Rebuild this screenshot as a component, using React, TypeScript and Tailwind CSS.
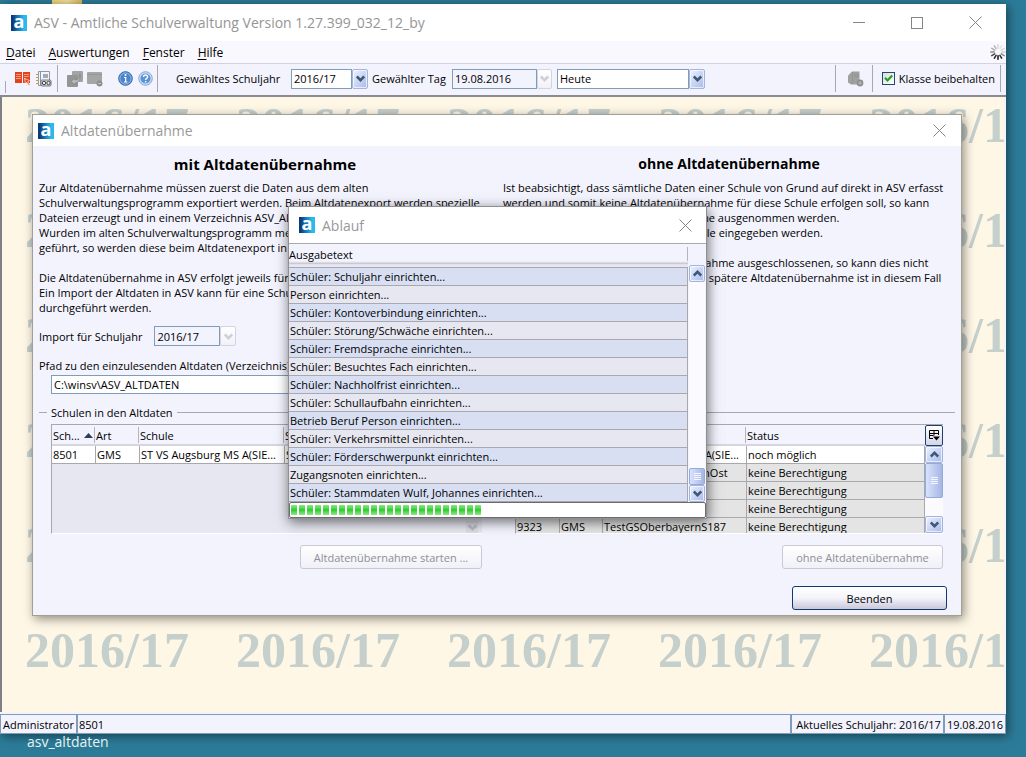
import React from "react";

function Logo() {
  return (
    <span
      aria-hidden="true"
      className="flex h-4 w-4 shrink-0 items-center justify-center bg-linear-to-r from-[#0f3a78] from-10% via-[#1787c4] via-50% to-[#2ab9ee] to-80% pb-1 text-[18px] leading-none font-bold text-white"
    >
      a
    </span>
  );
}

function CloseIcon() {
  return (
    <svg width="13" height="13" viewBox="0 0 13 13" fill="none" stroke="#858585" strokeWidth="1">
      <path d="M.5.5l12 12M12.5.5l-12 12" />
    </svg>
  );
}

function Chevron({ up = false, color = "#3f5878" }: { up?: boolean; color?: string }) {
  return (
    <svg width="9" height="7" viewBox="0 0 9 7" fill="none" stroke={color} strokeWidth="2.6">
      <path d={up ? "M.8 5.6l3.7-3.7 3.7 3.7" : "M.8 1.4l3.7 3.7 3.7-3.7"} />
    </svg>
  );
}

const arrowBox =
  "flex items-center justify-center rounded-[2px] border border-[#a3b5de] bg-linear-to-br from-[#eef2fe] to-[#a9baea] shadow-[inset_0_0_0_1px_#ffffffaa]";
const arrowBoxOff =
  "flex items-center justify-center rounded-[2px] border border-[#d3d4de] bg-linear-to-b from-white to-[#f1f1f8]";

function Combo({
  label,
  value,
  width,
  disabled = false,
}: {
  label: string;
  value: string;
  width: string;
  disabled?: boolean;
}) {
  return (
    <span className={`relative flex h-5 ${width}`}>
      <select
        aria-label={label}
        disabled={disabled}
        className={`mr-4 w-full appearance-none border border-[#7f9db9] pl-[2px] text-black opacity-100 ${
          disabled ? "bg-[#f3f3fe]" : "bg-white"
        }`}
      >
        <option>{value}</option>
      </select>
      <span
        className={`pointer-events-none absolute inset-y-0 right-0 w-4 ${
          disabled ? arrowBoxOff : arrowBox + " border-[#7f9db9]"
        }`}
      >
        <Chevron color={disabled ? "#cfcfd8" : "#3f5878"} />
      </span>
    </span>
  );
}

function Separator() {
  return <span className="h-[27px] w-px shrink-0 bg-[#a9a9ad]" />;
}

function ToolButton({ label, children }: { label: string; children: React.ReactNode }) {
  return (
    <button aria-label={label} className="flex h-4 w-4 shrink-0 items-center justify-center">
      {children}
    </button>
  );
}

function BookIcon() {
  return (
    <svg width="16" height="16" viewBox="0 0 16 16">
      <path d="M0 1h7v11H0zM8 1h7v11H8z" fill="#e2431c" />
      <path d="M1 3.500h5M1 5.500h5M1 7.500h5M9 3.500h5M9 5.500h5M9 7.500h2" stroke="#f59a80" />
      <path d="M9.500 7.500l5 2-1.700 1 2.200 3.500-1 .7-2.300-3.500-1.200 1.300z" fill="#e2431c" stroke="#fff" strokeWidth=".6" />
    </svg>
  );
}

function NotebookIcon() {
  return (
    <svg width="16" height="16" viewBox="0 0 16 16">
      <path d="M2.500.5h11v14h-11z" fill="#f4f5f7" stroke="#8d97a5" />
      <path d="M4.500 1v13" stroke="#6f9ad0" />
      <path d="M0 3.500h3M0 6.500h3M0 9.500h3M0 12.500h3" stroke="#c79a4a" />
      <path d="M7 3h5v4H7z" fill="#a4a9b0" />
      <rect x="5" y="9" width="10" height="6" rx="1" fill="#d9dadd" stroke="#77797e" />
      <circle cx="8" cy="12" r="1.700" fill="#eee" stroke="#444" />
      <circle cx="12.500" cy="12" r="1.700" fill="#eee" stroke="#444" />
    </svg>
  );
}

function SwapIcon() {
  return (
    <svg width="16" height="16" viewBox="0 0 16 16">
      <rect x="5" y="0" width="11" height="11" rx="1" fill="#a3a3a3" />
      <rect x="0" y="4" width="11" height="12" rx="1" fill="#959595" />
      <path d="M13 3c0 4-2 6-5 6V7l-4 3.500L8 14v-2c3 0 6-3 5-9z" fill="#b9b9b9" stroke="#838383" strokeWidth=".7" />
    </svg>
  );
}

function WindowIcon() {
  return (
    <svg width="16" height="16" viewBox="0 0 16 16">
      <rect x="0" y="1" width="15" height="12" rx="1" fill="#a5a5a5" />
      <path d="M0 3.500h15" stroke="#979797" />
      <circle cx="12.500" cy="12.500" r="3" fill="#8f8f8f" />
      <path d="M11 12.500h3" stroke="#c4c4c4" />
    </svg>
  );
}

function InfoIcon() {
  return (
    <svg width="15" height="15" viewBox="0 0 15 15">
      <circle cx="7.500" cy="7.500" r="6.800" fill="#4a86c9" stroke="#2f64a8" />
      <circle cx="7.500" cy="7.500" r="5.600" fill="none" stroke="#a9ccf0" strokeWidth=".8" />
      <path d="M6 6.500h1.700v4.300M6 11h3.400" stroke="#fff" strokeWidth="1.200" fill="none" />
      <circle cx="7.500" cy="4" r="1" fill="#fff" />
    </svg>
  );
}

function HelpIcon() {
  return (
    <svg width="15" height="15" viewBox="0 0 15 15">
      <circle cx="7.500" cy="7.500" r="6.800" fill="#c8dcf4" stroke="#86a8d4" />
      <circle cx="7.500" cy="7.500" r="5" fill="#5c93d2" />
      <path d="M5.600 6c0-2.600 4-2.600 4 0 0 1.500-2 1.300-2 3M7.600 10v1.500" stroke="#fff" strokeWidth="1.400" fill="none" />
    </svg>
  );
}

function DatabaseIcon() {
  return (
    <svg width="16" height="16" viewBox="0 0 16 16">
      <path d="M0 4.500L4 .5h7.500v13H3L0 11.500z" fill="#a0a0a0" />
      <path d="M4.500 1v12" stroke="#949494" />
      <path d="M6 3.500h5M6 5.500h5" stroke="#939393" />
      <circle cx="12" cy="12" r="3.400" fill="#8f8f8f" />
      <path d="M12 10.300v3.400M10.300 12h3.400" stroke="#bdbdbd" />
    </svg>
  );
}

function Spinner() {
  const shades = ["#d9d9d9", "#e4e4e4", "#dadada", "#cfcfcf", "#8a8a8a", "#2a2a2a", "#111", "#222", "#444", "#888", "#aaa", "#b8b8b8"];
  return (
    <svg width="16" height="16" viewBox="-8 -8 16 16" strokeWidth="1.500" strokeLinecap="round">
      {shades.map((c, i) => (
        <path key={i} d="M0-3.800v-3.400" stroke={c} transform={`rotate(${i * 30})`} />
      ))}
    </svg>
  );
}

function MenuItem({ text }: { text: string }) {
  return (
    <button className="text-[12px]">
      <span className="underline underline-offset-2">{text[0]}</span>
      {text.slice(1)}
    </button>
  );
}

function Watermark() {
  return (
    <div
      aria-hidden="true"
      className="flex flex-col gap-[49px] pl-[23px] font-['Liberation_Serif',serif] text-[50px] leading-[56px] font-bold text-[#c5cfcc]"
    >
      {[0, 1, 2, 3, 4, 5].map((r) => (
        <div key={r} className="flex">
          {[0, 1, 2, 3, 4].map((c) => (
            <span key={c} className="w-[211px] shrink-0">
              2016/17
            </span>
          ))}
        </div>
      ))}
    </div>
  );
}

function HeadCell({ text, first = false, sorted = false }: { text: string; first?: boolean; sorted?: boolean }) {
  return (
    <th className="h-[21px] border-b-2 border-[#d6d6e2] p-0 text-left font-normal">
      <div
        className={`flex h-4 items-center gap-1 pt-[2px] pl-px ${first ? "" : "-ml-[2px] border-l border-[#b4b4bc]"}`}
      >
        {text}
        {sorted && (
          <svg width="9" height="5" viewBox="0 0 9 5" fill="#2c3e58">
            <path d="M4.500 0L9 5H0z" />
          </svg>
        )}
      </div>
    </th>
  );
}

function SchoolTable({
  rows,
  cols,
  sorted = false,
  caption,
}: {
  rows: string[][];
  cols: string[];
  sorted?: boolean;
  caption: string;
}) {
  return (
    <table className="w-full table-fixed border-separate border-spacing-0 whitespace-nowrap">
      <caption className="sr-only">{caption}</caption>
      <colgroup>
        {cols.map((c, i) => (
          <col key={i} className={c} />
        ))}
      </colgroup>
      <thead>
        <tr>
          <HeadCell text="Sch..." first sorted={sorted} />
          <HeadCell text="Art" />
          <HeadCell text="Schule" />
          <HeadCell text="Status" />
        </tr>
      </thead>
      <tbody>
        {rows.map((row, r) => (
          <tr key={r} className={r === 0 ? "bg-white" : "bg-[#e4e4e4]"}>
            {row.map((cell, i) => (
              <td
                key={i}
                className="h-[18px] overflow-hidden border-r border-b border-[#a9a9ad] p-0 pl-px leading-[17px]"
              >
                {cell}
              </td>
            ))}
          </tr>
        ))}
      </tbody>
    </table>
  );
}

function Thumb({ height }: { height: string }) {
  return (
    <span
      className={`flex flex-col items-center justify-center gap-px rounded-[2px] border border-[#94a9dc] bg-linear-to-r from-[#d9e3fd] to-[#a5b6e2] ${height}`}
    >
      {[0, 1, 2, 3].map((i) => (
        <span key={i} className="h-px w-[7px] bg-[#f4f7ff]" />
      ))}
    </span>
  );
}

const leftRows = [["8501", "GMS", "ST VS Augsburg MS A(SIE...", "SB"]];
const rightRows = [
  ["8501", "GMS", "ST VS Augsburg MS A(SIE...", "noch möglich"],
  ["9320", "GMS", "TestGSNiederbayernOst", "keine Berechtigung"],
  ["9321", "GMS", "", "keine Berechtigung"],
  ["9322", "GMS", "", "keine Berechtigung"],
  ["9323", "GMS", "TestGSOberbayernS187", "keine Berechtigung"],
];

const log = [
  "Schüler: Schuljahr einrichten...",
  "Person einrichten...",
  "Schüler: Kontoverbindung einrichten...",
  "Schüler: Störung/Schwäche einrichten...",
  "Schüler: Fremdsprache einrichten...",
  "Schüler: Besuchtes Fach einrichten...",
  "Schüler: Nachholfrist einrichten...",
  "Schüler: Schullaufbahn einrichten...",
  "Betrieb Beruf Person einrichten...",
  "Schüler: Verkehrsmittel einrichten...",
  "Schüler: Förderschwerpunkt einrichten...",
  "Zugangsnoten einrichten...",
  "Schüler: Stammdaten Wulf, Johannes einrichten...",
];

function ImportDialog() {
  return (
    <section
      aria-label="Altdatenübernahme"
      className="absolute top-[17px] right-[42px] left-[30px] border border-[#a29f97] bg-[#f3f3fe] shadow-[2px_3px_10px_#00000070]"
    >
      <header className="flex h-[31px] items-center bg-white pr-[15px] pl-[5px]">
        <Logo />
        <span className="ml-[7px] flex-1 text-[14px] text-[#999]">Altdatenübernahme</span>
        <button aria-label="Schließen">
          <CloseIcon />
        </button>
      </header>
      <div className="px-[6px] pt-2 pb-[5px] whitespace-nowrap">
        <div className="grid grid-cols-2 gap-x-3">
          <div>
            <h2 className="text-center text-[15px] leading-5 font-bold">mit Altdatenübernahme</h2>
            <p className="mt-[6px]">
              Zur Altdatenübernahme müssen zuerst die Daten aus dem alten
              <br />
              Schulverwaltungsprogramm exportiert werden. Beim Altdatenexport werden spezielle
              <br />
              Dateien erzeugt und in einem Verzeichnis ASV_ALTDATEN abgelegt.
              <br />
              Wurden im alten Schulverwaltungsprogramm mehrere Schulen
              <br />
              geführt, so werden diese beim Altdatenexport in eine Datei
              <br />
              <br />
              Die Altdatenübernahme in ASV erfolgt jeweils für eine Schule.
              <br />
              Ein Import der Altdaten in ASV kann für eine Schule nur einmal
              <br />
              durchgeführt werden.
            </p>
            <div className="mt-[11px] flex items-center gap-3">
              <span>Import für Schuljahr</span>
              <Combo label="Import für Schuljahr" value="2016/17" width="w-[82px]" disabled />
            </div>
            <label htmlFor="path" className="mt-3 block">
              Pfad zu den einzulesenden Altdaten (Verzeichnis)
            </label>
            <div className="mt-[2px] pr-[9px] pl-3">
              <input
                id="path"
                defaultValue="C:\winsv\ASV_ALTDATEN"
                className="block h-[19px] w-full border border-[#7f9db9] bg-white pl-[2px]"
              />
            </div>
          </div>
          <div>
            <h2 className="text-center text-[14px] leading-5 font-bold">ohne Altdatenübernahme</h2>
            <p className="mt-[6px]">
              Ist beabsichtigt, dass sämtliche Daten einer Schule von Grund auf direkt in ASV erfasst
              <br />
              werden und somit keine Altdatenübernahme für diese Schule erfolgen soll, so kann
              <br />
              diese Schule von der Altdatenübernahme ausgenommen werden.
              <br />
              Alle Daten müssen direkt für diese Schule eingegeben werden.
              <br />
              <br />
              Wurde eine Schule von der Datenübernahme ausgeschlossenen, so kann dies nicht
              <br />
              mehr rückgängig gemacht werden. Eine spätere Altdatenübernahme ist in diesem Fall
            </p>
          </div>
        </div>
        <div className="mt-[10px] flex h-4 items-center gap-1">
          <span className="h-px w-2 bg-[#a9a9ad]" />
          <span>Schulen in den Altdaten</span>
          <span className="h-px flex-1 bg-[#a9a9ad]" />
        </div>
        <div className="mt-1 grid grid-cols-2 gap-x-3">
          <div className="pr-[9px] pl-3">
            <div className="flex h-[110px] overflow-hidden border-t border-b border-l border-t-[#a9a9ad] border-b-white border-l-[#a9a9ad] bg-linear-to-b from-[#f3f3fe] from-20% to-[#e7e7f1] to-20%">
              <div className="min-w-0 flex-1">
                <SchoolTable caption="Schulen mit Altdaten" rows={leftRows} sorted cols={["w-11", "w-11", "w-[145px]", ""]} />
              </div>
              <div className="flex w-5 items-end justify-center">
                <span className="flex h-3 w-3 items-center justify-center bg-[#dcdce4]">
                  <Chevron color="#bcbcc6" />
                </span>
              </div>
            </div>
            <div className="mt-[11px] flex justify-end">
              <button
                disabled
                className="h-6 w-[182px] rounded-[3px] border border-[#c9c9d3] bg-linear-to-b from-white to-[#f0f0f8] text-[#8f8f93]"
              >
                Altdatenübernahme starten ...
              </button>
            </div>
          </div>
          <div className="pr-3 pl-3">
            <div className="flex h-[110px] overflow-hidden border-t border-b border-l border-t-[#a9a9ad] border-b-white border-l-[#a9a9ad]">
              <div className="min-w-0 flex-1">
                <SchoolTable caption="Schulen ohne Altdaten" rows={rightRows} cols={["w-11", "w-[43px]", "w-[144px]", ""]} />
              </div>
              <div className="flex w-[18px] flex-col">
                <button
                  aria-label="Spalten wählen"
                  className="flex h-[21px] items-center justify-center rounded-[2px] border border-[#1c3f73] bg-linear-to-b from-white to-[#d6d6e4]"
                >
                  <svg width="11" height="11" viewBox="0 0 11 11" fill="none" stroke="#000">
                    <path d="M4 8.500H.5v-8h9V5M.5 3.500h9M5 .5v5M.5 5.500h4" />
                    <path d="M4 6.500h7L7.500 10.500z" fill="#000" stroke="none" />
                  </svg>
                </button>
                <button aria-label="Nach oben" className={`h-[17px] ${arrowBox}`}>
                  <Chevron up />
                </button>
                <Thumb height="h-[35px]" />
                <span className="flex-1 bg-[#fbfbff]" />
                <button aria-label="Nach unten" className={`h-[17px] ${arrowBox}`}>
                  <Chevron />
                </button>
              </div>
            </div>
            <div className="mt-[11px] flex justify-end">
              <button
                disabled
                className="h-6 w-[161px] rounded-[3px] border border-[#c9c9d3] bg-linear-to-b from-white to-[#f0f0f8] text-[#8f8f93]"
              >
                ohne Altdatenübernahme
              </button>
            </div>
          </div>
        </div>
        <div className="mt-[17px] flex justify-end pr-2">
          <button className="h-6 w-[155px] rounded-[3px] border border-[#123a72] bg-linear-to-b from-white via-[#f4f4fa] to-[#c8c8da]">
            Beenden
          </button>
        </div>
      </div>
    </section>
  );
}

function ProgressDialog() {
  return (
    <section
      aria-label="Ablauf"
      className="absolute top-[109px] left-[286px] w-[419px] border border-[#8f8f94] bg-[#f3f3fe] whitespace-nowrap shadow-[1px_3px_12px_#00000090]"
    >
      <header className="flex h-[37px] items-center border-b border-[#a9a9ad] bg-white pr-[14px] pl-[10px]">
        <Logo />
        <span className="ml-[7px] flex-1 text-[14px] text-[#999]">Ablauf</span>
        <button aria-label="Schließen">
          <CloseIcon />
        </button>
      </header>
      <div className="flex">
        <table className="flex-1 border-separate border-spacing-0">
          <thead className="block">
            <tr className="block">
              <th className="block h-6 border-b border-[#a9a9ad] bg-linear-to-b from-[#f3f3fe] from-75% via-[#c9c9d3] via-85% to-[#e7e7f1] to-90% p-0 pt-[3px] text-left leading-[15px] font-normal">
                Ausgabetext
              </th>
            </tr>
          </thead>
          <tbody className="block">
            {log.map((line, i) => (
              <tr key={line} className={`block ${i % 2 ? "bg-[#e7e7f1]" : "bg-[#d8dff3]"}`}>
                <td className="block h-[18px] border-r border-b border-[#a9a9ad] p-0 pl-px leading-[18px]">{line}</td>
              </tr>
            ))}
          </tbody>
        </table>
        <div className="flex w-[18px] flex-col px-px">
          <span className="-ml-[2px] mt-[3px] h-[14px] border-l border-[#b4b4bc]" />
          <button aria-label="Nach oben" className={`mt-1 h-[17px] ${arrowBox}`}>
            <Chevron up />
          </button>
          <span className="flex-1 bg-[#fbfbff]" />
          <Thumb height="h-[17px]" />
          <button aria-label="Nach unten" className={`h-[17px] ${arrowBox}`}>
            <Chevron />
          </button>
        </div>
      </div>
      <div
        role="progressbar"
        aria-label="Fortschritt"
        aria-valuenow={46}
        className="flex h-4 items-center gap-[2px] rounded-[2px] border border-[#6b6b6b] bg-white pl-px"
      >
        {Array.from({ length: 24 }, (_, i) => (
          <span key={i} className="h-[10px] w-[6px] bg-linear-to-b from-[#8be88b] via-[#22cc22] to-[#8be88b]" />
        ))}
      </div>
    </section>
  );
}

export default function App() {
  return (
    <div className="flex min-h-screen flex-col bg-[#2c7c99] pr-5 font-['Open_Sans',sans-serif] text-[11px] leading-[15px] text-black">
      <div className="flex h-1 pl-[52px]">
        <span className="w-[30px] bg-linear-to-r from-[#f0d272] via-[#f6e3a0] to-[#d9b85c]" />
      </div>
      <main className="flex flex-1 flex-col bg-[#f3f3fe] shadow-[2px_2px_10px_#00000080]">
        <header className="flex h-[37px] items-center bg-white pr-6 pl-[11px] text-[#959595]">
          <Logo />
          <h1 className="ml-[7px] flex-1 text-[14px]">ASV - Amtliche Schulverwaltung Version 1.27.399_032_12_by</h1>
          <div className="flex items-center gap-[46px]">
            <button aria-label="Minimieren" className="flex h-3 w-3 items-center">
              <span className="h-px w-full bg-[#858585]" />
            </button>
            <button aria-label="Maximieren" className="h-3 w-3 border border-[#858585]" />
            <button aria-label="Schließen">
              <CloseIcon />
            </button>
          </div>
        </header>
        <nav className="flex h-[22px] items-center gap-[13px] bg-[#f8f8fe] pl-[6px]">
          <MenuItem text="Datei" />
          <MenuItem text="Auswertungen" />
          <MenuItem text="Fenster" />
          <MenuItem text="Hilfe" />
          <span className="ml-auto">
            <Spinner />
          </span>
        </nav>
        <div className="flex h-[34px] items-center border-t border-b-2 border-t-[#d2d2e2] border-b-[#8a8a92] pr-[5px] pb-[2px] pl-[5px] whitespace-nowrap">
          <span className="mr-[9px] h-3 w-px self-end bg-[#a9a9ad]" />
          <div className="flex items-center gap-[5px]">
            <ToolButton label="Buch">
              <BookIcon />
            </ToolButton>
            <ToolButton label="Notizbuch">
              <NotebookIcon />
            </ToolButton>
            <Separator />
          </div>
          <div className="ml-[9px] flex items-center gap-1">
            <ToolButton label="Tauschen">
              <SwapIcon />
            </ToolButton>
            <ToolButton label="Fenster">
              <WindowIcon />
            </ToolButton>
            <span className="ml-px">
              <Separator />
            </span>
          </div>
          <div className="ml-[9px] flex items-center gap-1">
            <ToolButton label="Info">
              <InfoIcon />
            </ToolButton>
            <ToolButton label="Hilfe">
              <HelpIcon />
            </ToolButton>
            <Separator />
          </div>
          <span className="ml-[18px] w-[115px]">Gewähltes Schuljahr</span>
          <Combo label="Gewähltes Schuljahr" value="2016/17" width="w-[77px]" />
          <label htmlFor="day" className="ml-1 w-20">
            Gewählter Tag
          </label>
          <input
            id="day"
            defaultValue="19.08.2016"
            className="h-5 w-[85px] border border-[#7f9db9] bg-[#f3f3fe] pl-[2px]"
          />
          <button aria-label="Kalender" disabled className={`h-5 w-[15px] ${arrowBoxOff}`}>
            <Chevron color="#cfcfd8" />
          </button>
          <span className="w-[5px]" />
          <Combo label="Tag" value="Heute" width="w-[148px]" />
          <div className="ml-auto flex items-center">
            <Separator />
            <span className="mr-2 ml-3">
              <ToolButton label="Datenbank">
                <DatabaseIcon />
              </ToolButton>
            </span>
            <Separator />
            <label className="mr-[5px] ml-[9px] flex items-center gap-1">
              <span className="relative flex h-[13px] w-[13px]">
                <input
                  type="checkbox"
                  defaultChecked
                  className="peer h-full w-full appearance-none border border-[#1c4a80] bg-linear-to-br from-[#dcdcd8] to-white"
                />
                <svg
                  className="pointer-events-none absolute inset-0 hidden peer-checked:block"
                  width="13"
                  height="13"
                  viewBox="0 0 13 13"
                  fill="none"
                  stroke="#21a121"
                  strokeWidth="2.200"
                >
                  <path d="M3 5.800l2.500 2.700 4.700-5" />
                </svg>
              </span>
              <span>Klasse beibehalten</span>
            </label>
            <Separator />
          </div>
        </div>
        <div className="relative mr-[2px] min-h-[614px] flex-1 overflow-hidden border-l-2 border-[#808086] bg-[#fff7e6]">
          <Watermark />
          <ImportDialog />
          <ProgressDialog />
        </div>
        <footer className="mt-[2px] flex h-5 items-center border border-[#7f9db9] whitespace-nowrap">
          <span className="w-[75px] pl-[2px]">Administrator</span>
          <span className="flex h-full flex-1 items-center border-l-2 border-[#7f9db9] pl-px">8501</span>
          <span className="flex h-full items-center border-l-2 border-[#7f9db9] pr-[2px] pl-1">
            Aktuelles Schuljahr: 2016/17
          </span>
          <span className="flex h-full items-center border-l-2 border-[#7f9db9] px-[2px]">19.08.2016</span>
        </footer>
      </main>
      <div className="h-[23px] pl-[27px] text-[14px] leading-[15px] text-[#e8f1f4]">asv_altdaten</div>
    </div>
  );
}
